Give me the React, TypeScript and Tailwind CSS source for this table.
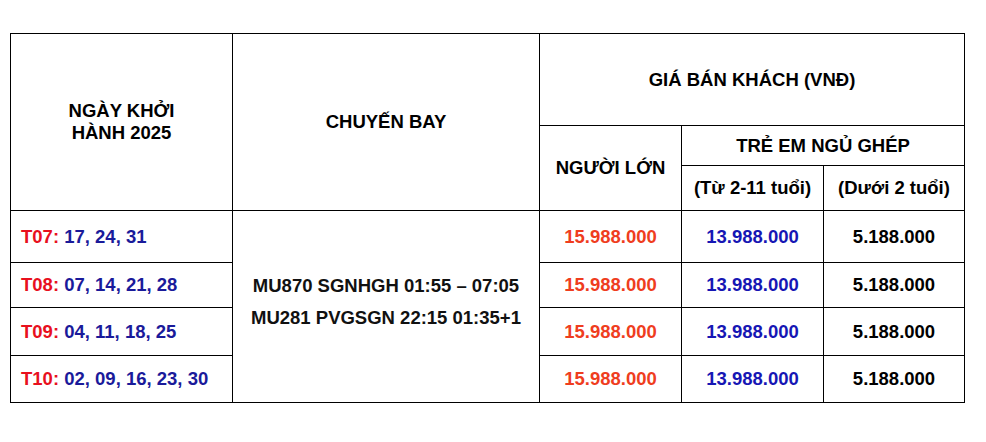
import React from "react";

const rows = [
  { m: "T07", d: "17, 24, 31", h: "h-[52px]" },
  { m: "T08", d: "07, 14, 21, 28", h: "h-[45px]" },
  { m: "T09", d: "04, 11, 18, 25", h: "h-[48px]" },
  { m: "T10", d: "02, 09, 16, 23, 30", h: "h-[47px]" },
];

export default function App() {
  const cell = "border border-black";
  return (
    <div
      className="w-[986px] h-[442px] bg-white pt-[33px] pl-[10px] text-[18.5px] font-bold text-black"
      style={{ fontFamily: '"Liberation Sans", Arial, sans-serif' }}
    >
      <table className="table-fixed border-collapse w-[954px]">
        <colgroup>
          <col className="w-[222px]" />
          <col className="w-[307px]" />
          <col className="w-[142px]" />
          <col className="w-[142px]" />
          <col className="w-[141px]" />
        </colgroup>
        <thead>
          <tr className="h-[92px]">
            <th rowSpan={3} className={`${cell} text-center align-middle leading-[22px] font-bold`}>
              NGÀY KHỞI
              <br />
              HÀNH 2025
            </th>
            <th rowSpan={3} className={`${cell} text-center align-middle font-bold`}>
              CHUYẾN BAY
            </th>
            <th colSpan={3} className={`${cell} text-center align-middle font-bold`}>
              GIÁ BÁN KHÁCH (VNĐ)
            </th>
          </tr>
          <tr className="h-[40px]">
            <th rowSpan={2} className={`${cell} text-center align-middle font-bold`}>
              NGƯỜI LỚN
            </th>
            <th colSpan={2} className={`${cell} text-center align-middle font-bold`}>
              TRẺ EM NGỦ GHÉP
            </th>
          </tr>
          <tr className="h-[45px]">
            <th className={`${cell} text-center align-middle font-bold`}>(Từ 2-11 tuổi)</th>
            <th className={`${cell} text-center align-middle font-bold`}>(Dưới 2 tuổi)</th>
          </tr>
        </thead>
        <tbody>
          {rows.map((r, i) => (
            <tr key={r.m} className={r.h}>
              <td className={`${cell} pl-[10px] align-middle`}>
                <span className="text-[#e8101e]">{r.m}: </span>
                <span className="text-[#1a1a9a]">{r.d}</span>
              </td>
              {i === 0 && (
                <td rowSpan={4} className={`${cell} text-center align-middle`}>
                  <div className="flex flex-col items-center leading-[32px] pb-[10px] text-[#111]">
                    <span>MU870 SGNHGH 01:55 – 07:05</span>
                    <span>MU281 PVGSGN 22:15 01:35+1</span>
                  </div>
                </td>
              )}
              <td className={`${cell} text-center align-middle text-[#ef3d1e]`}>15.988.000</td>
              <td className={`${cell} text-center align-middle text-[#1616b4]`}>13.988.000</td>
              <td className={`${cell} text-center align-middle text-black`}>5.188.000</td>
            </tr>
          ))}
        </tbody>
      </table>
    </div>
  );
}
